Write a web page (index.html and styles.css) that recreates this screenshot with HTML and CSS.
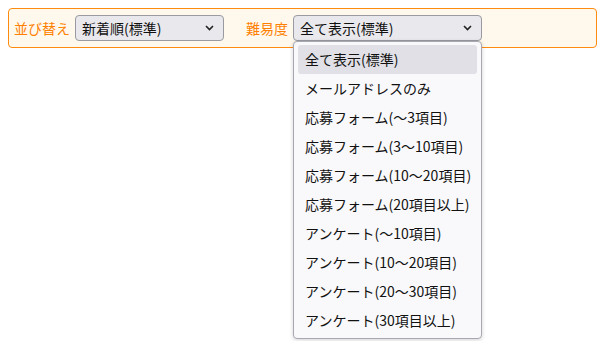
FILE: index.html
```html
<!DOCTYPE html>
<html lang="ja">
<head>
  <meta charset="UTF-8">
  <title>フォーム一覧</title>
  <link rel="stylesheet" href="styles.css">
</head>
<body>
  <div class="filter-bar">
    <label class="filter-label">並び替え</label>
    <div class="select sort-select">
      <span>新着順(標準)</span>
      <svg class="chevron" width="9" height="6" viewBox="0 0 9 6"><path d="M1 1 L4.5 4.5 L8 1" fill="none" stroke="#222" stroke-width="1.6"/></svg>
    </div>

    <label class="filter-label level-label">難易度</label>
    <div class="select-wrap">
      <div class="select level-select">
        <span>全て表示(標準)</span>
        <svg class="chevron" width="9" height="6" viewBox="0 0 9 6"><path d="M1 1 L4.5 4.5 L8 1" fill="none" stroke="#222" stroke-width="1.6"/></svg>
      </div>
      <!-- 開いているプルダウン -->
      <ul class="options">
        <li class="active">全て表示(標準)</li>
        <li>メールアドレスのみ</li>
        <li>応募フォーム(～3項目)</li>
        <li>応募フォーム(3～10項目)</li>
        <li>応募フォーム(10～20項目)</li>
        <li>応募フォーム(20項目以上)</li>
        <li>アンケート(～10項目)</li>
        <li>アンケート(10～20項目)</li>
        <li>アンケート(20～30項目)</li>
        <li>アンケート(30項目以上)</li>
      </ul>
    </div>
  </div>
</body>
</html>
```

FILE: styles.css
```css
html {
  height: 100%;
}

body {
  margin: 8px;
  min-height: calc(100% - 16px);
  background: #ffffff;
  font-family: "Noto Sans CJK JP", "Noto Sans", sans-serif;
  font-size: 14px;
  color: #1a1a1a;
}

/* 絞り込みバー */
.filter-bar {
  display: flex;
  align-items: center;
  height: 38px;
  padding: 0 5px;
  border: 1px solid #ff8a10;
  border-radius: 4px;
  background: #fff8ec;
}

.filter-label {
  color: #ff8000;
  margin-right: 5px;
  line-height: 1;
}

.level-label {
  margin-left: 22px;
}

.select {
  box-sizing: border-box;
  display: flex;
  align-items: center;
  justify-content: space-between;
  height: 26px;
  padding: 0 9px 0 6px;
  border: 1px solid #9a9aa2;
  border-radius: 4px;
  background: #e9e9ed;
  color: #111;
  line-height: 1;
}

.sort-select {
  width: 149px;
}

.level-select {
  width: 189px;
}

.chevron {
  display: block;
}

.select-wrap {
  position: relative;
  height: 26px;
}

/* プルダウン */
.options {
  position: absolute;
  top: 26px;
  left: 0;
  box-sizing: border-box;
  width: 189px;
  margin: 0;
  padding: 3px 4px 3px;
  list-style: none;
  background: #f9f9fb;
  border: 1px solid #a8a8b0;
  border-radius: 4px;
  box-shadow: 0 1px 4px rgba(0,0,0,0.18);
  z-index: 5;
}

.options li {
  display: block;
  height: 29px;
  line-height: 29px;
  padding: 0 7px;
  border-radius: 3px;
  white-space: nowrap;
  color: #111;
}

.options li.active {
  background: #e0e0e6;
}
```
